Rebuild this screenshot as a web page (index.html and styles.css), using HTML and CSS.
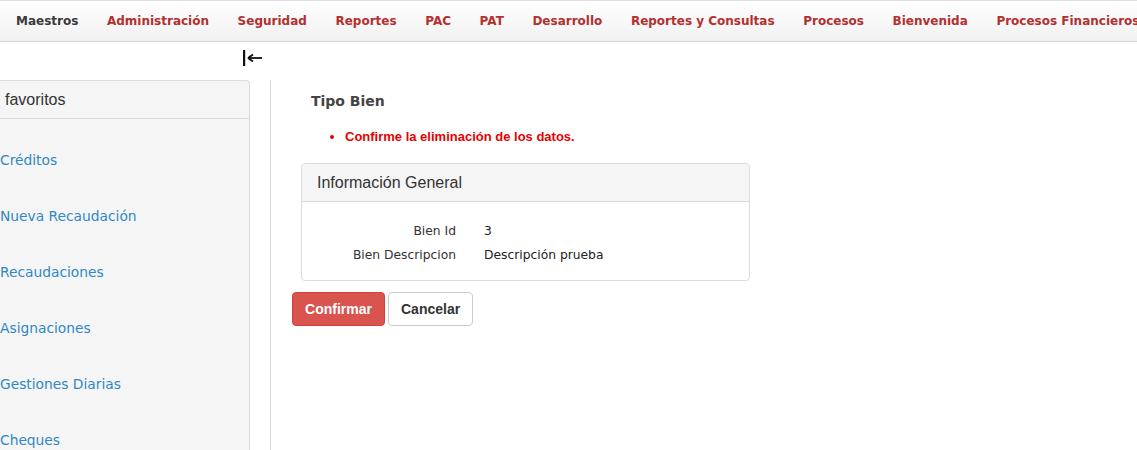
FILE: index.html
```html
<!DOCTYPE html>
<html lang="es">
<head>
<meta charset="utf-8">
<title>Tipo Bien</title>
<link rel="stylesheet" href="styles.css">
</head>
<body>
<nav class="topnav">
  <ul class="menu">
    <li class="menu-item active">Maestros</li>
    <li class="menu-item">Administración</li>
    <li class="menu-item">Seguridad</li>
    <li class="menu-item">Reportes</li>
    <li class="menu-item">PAC</li>
    <li class="menu-item">PAT</li>
    <li class="menu-item">Desarrollo</li>
    <li class="menu-item">Reportes y Consultas</li>
    <li class="menu-item">Procesos</li>
    <li class="menu-item">Bienvenida</li>
    <li class="menu-item">Procesos Financieros</li>
  </ul>
</nav>
<div class="toolbar">
  <svg class="collapse-icon" width="20" height="16" viewBox="0 0 20 16" aria-hidden="true">
    <rect x="0" y="0" width="2.2" height="16" fill="#111"/>
    <path d="M5 8 H19" stroke="#111" stroke-width="1.8" fill="none"/>
    <path d="M5 8 L10 4.5 M5 8 L10 11.5" stroke="#111" stroke-width="1.8" fill="none"/>
  </svg>
</div>
<div class="main">
  <aside class="sidebar">
    <div class="sidebar-head">favoritos</div>
    <ul class="fav-list">
      <li><a class="fav-link">Créditos</a></li>
      <li><a class="fav-link">Nueva Recaudación</a></li>
      <li><a class="fav-link">Recaudaciones</a></li>
      <li><a class="fav-link">Asignaciones</a></li>
      <li><a class="fav-link">Gestiones Diarias</a></li>
      <li><a class="fav-link">Cheques</a></li>
    </ul>
  </aside>
  <section class="content">
    <h2 class="page-title">Tipo Bien</h2>
    <ul class="errors">
      <li>Confirme la eliminación de los datos.</li>
    </ul>
    <div class="panel">
      <div class="panel-head">Información General</div>
      <div class="panel-body">
        <dl class="details">
          <dt>Bien Id</dt>
          <dd>3</dd>
          <dt>Bien Descripcion</dt>
          <dd>Descripción prueba</dd>
        </dl>
      </div>
    </div>
    <div class="actions">
      <button class="btn btn-danger">Confirmar</button>
      <button class="btn btn-default">Cancelar</button>
    </div>
  </section>
</div>
</body>
</html>
```

FILE: styles.css
```css
* { box-sizing: border-box; }

html, body {
  margin: 0;
  padding: 0;
  background: #fff;
  height: 100%;
  overflow: hidden;
}

body {
  font-family: "DejaVu Sans", Verdana, sans-serif;
  color: #333;
}

.topnav {
  height: 42px;
  border-top: 1px solid #e0e0e0;
  border-bottom: 1px solid #d6d6d6;
  background: linear-gradient(#ffffff, #f1f1f1);
  overflow: hidden;
}

.menu {
  list-style: none;
  margin: 0;
  padding: 0 0 0 1.7px;
  display: flex;
  white-space: nowrap;
}

.menu-item {
  padding: 0 14.3px;
  line-height: 41px;
  font-size: 12px;
  font-weight: bold;
  color: #b3302f;
  flex: none;
}

.menu-item.active {
  color: #3a3a3a;
}

.toolbar {
  height: 38px;
  padding: 8px 0 0 243px;
}

.collapse-icon {
  display: block;
}

.main {
  display: flex;
  height: 370px;
}

.sidebar {
  width: 260px;
  margin-left: -10px;
  flex: none;
  background: #f5f5f5;
  border: 1px solid #dcdcdc;
  border-bottom: none;
  border-top-right-radius: 4px;
}

.sidebar-head {
  height: 38px;
  line-height: 37px;
  padding-left: 14px;
  font-family: "Liberation Sans", Arial, sans-serif;
  font-size: 16px;
  color: #333;
  border-bottom: 1px solid #dcdcdc;
}

.fav-list {
  list-style: none;
  margin: 0;
  padding: 13px 0 0 0;
}

.fav-link {
  display: block;
  line-height: 56px;
  padding-left: 9px;
  font-size: 13.8px;
  color: #2f88c4;
}

.content {
  margin-left: 20px;
  border-left: 1px solid #dcdcdc;
  padding-left: 21px;
  flex: 1;
}

.page-title {
  margin: 10px 0 0 19px;
  font-size: 14px;
  font-weight: bold;
  color: #444;
  line-height: 22px;
}

.errors {
  margin: 17px 0 0 0;
  padding-left: 53px;
  font-family: "Liberation Sans", Arial, sans-serif;
  font-weight: bold;
  font-size: 13px;
  color: #e80000;
  line-height: 16px;
}

.panel {
  margin: 18px 0 0 9px;
  width: 449px;
  border: 1px solid #dcdcdc;
  border-radius: 4px;
}

.panel-head {
  height: 38px;
  line-height: 37px;
  padding-left: 15px;
  background: #f5f5f5;
  border-bottom: 1px solid #dcdcdc;
  border-radius: 4px 4px 0 0;
  font-family: "Liberation Sans", Arial, sans-serif;
  font-size: 16px;
  color: #333;
}

.panel-body {
  padding: 20px 0 16px 0;
}

.details {
  display: grid;
  grid-template-columns: 154px auto;
  column-gap: 28px;
  row-gap: 6px;
  margin: 0;
  font-size: 12.3px;
  line-height: 18px;
  color: #333;
}

.details dt {
  text-align: right;
}

.details dd {
  margin: 0;
  color: #222;
}

.actions {
  display: flex;
  gap: 3px;
  margin-top: 11px;
}

.btn {
  height: 34px;
  padding: 0 12px;
  font-family: "Liberation Sans", Arial, sans-serif;
  font-size: 14px;
  font-weight: bold;
  border-radius: 4px;
  border: 1px solid transparent;
}

.btn-danger {
  width: 93px;
  background: #d9534f;
  border-color: #d43f3a;
  color: #fff;
}

.btn-default {
  width: 85px;
  background: #fff;
  border-color: #cccccc;
  color: #333;
}
```
